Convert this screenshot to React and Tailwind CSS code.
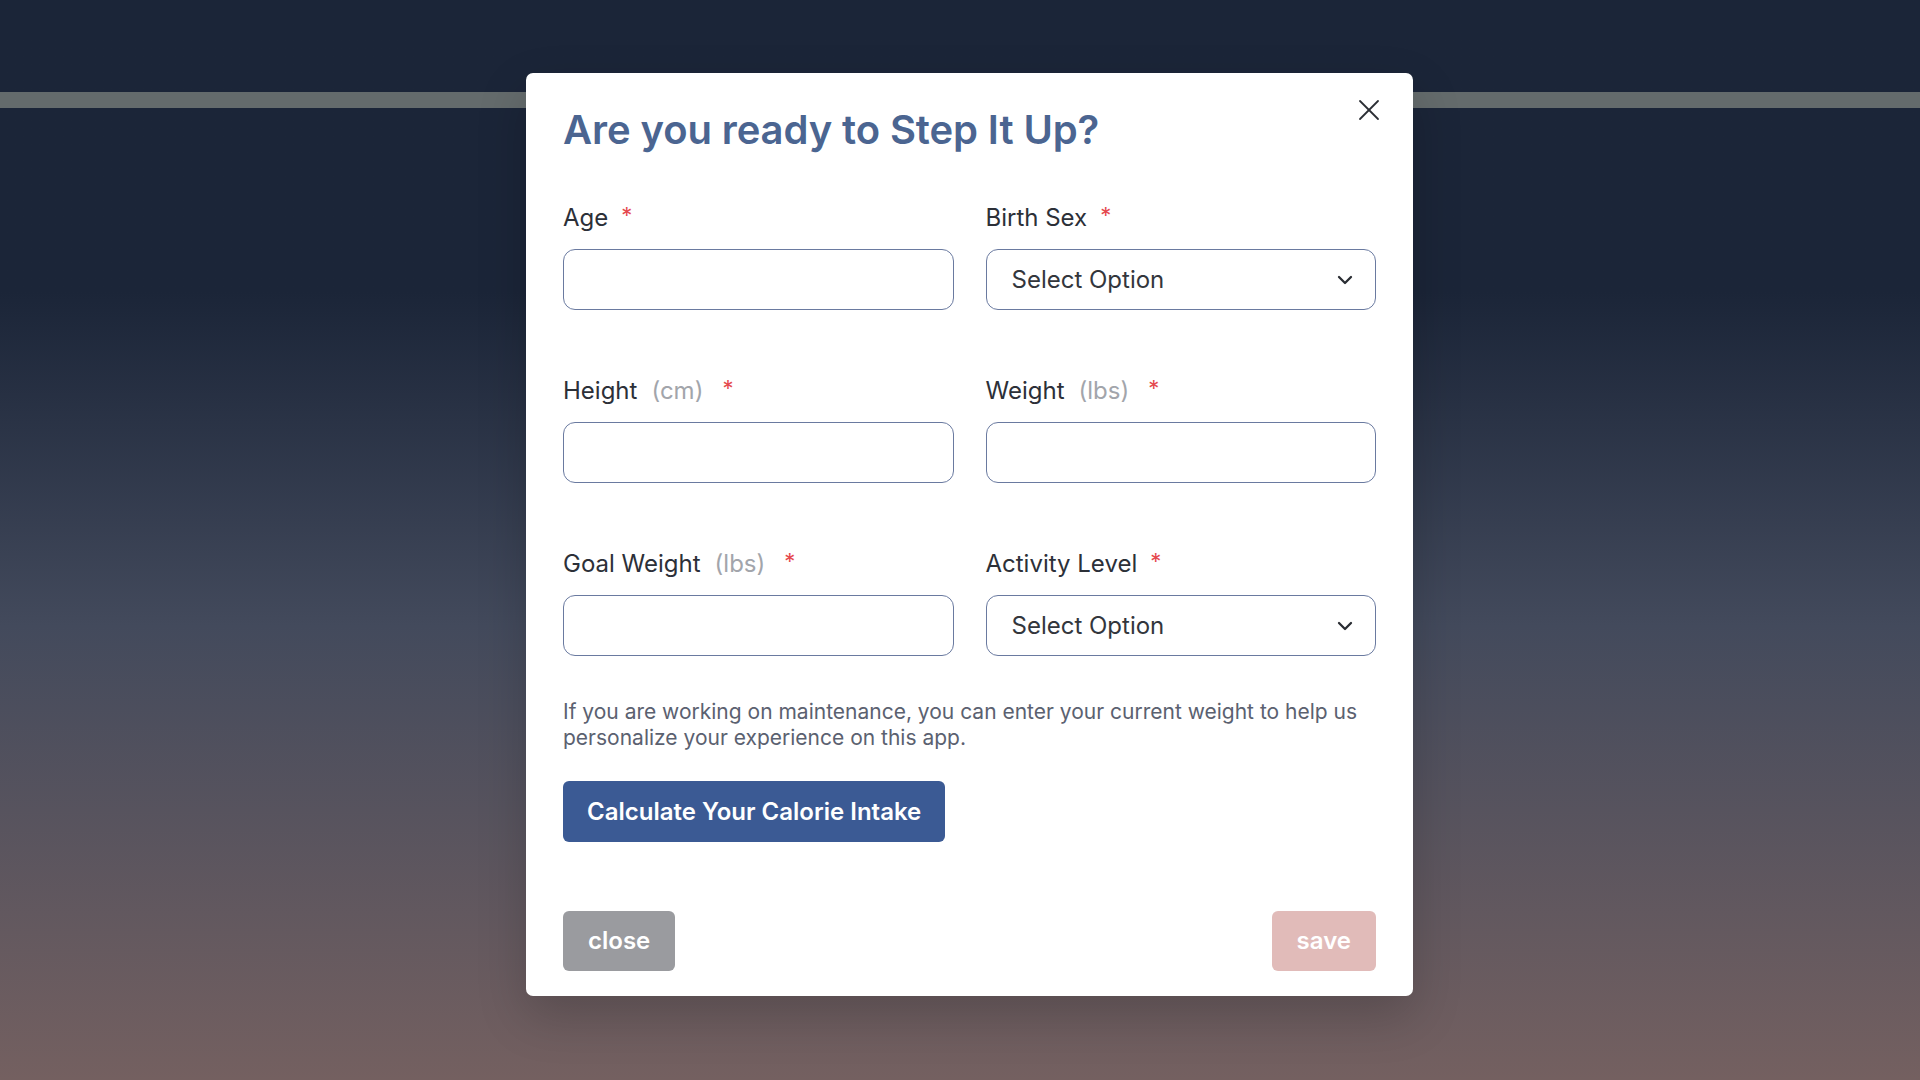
import { X, ChevronDown } from 'lucide-react';

// ─── Form field ───────────────────────────────────────────────────────────────

const Field = ({ label, unit, children }) => (
    <div className="flex flex-col">
        <div className="flex items-center h-[30px] text-[24px] leading-[30px] text-[#2c3038]">
            <span>{label}</span>
            {unit && <span className="ml-[14px] text-[#a2a5ab]">{unit}</span>}
            <span className={`${unit ? 'ml-[19px]' : 'ml-[13px]'} text-[22px] leading-none text-[#e5484d] -translate-y-[3px]`}>*</span>
        </div>
        <div className="mt-[16px]">{children}</div>
    </div>
);

const TextInput = () => (
    <input
        type="text"
        className="block w-full h-[61px] px-[24px] rounded-[12px] border-[1.5px] border-[#6a7aa0] bg-white text-[24px] text-[#333] outline-none"
    />
);

const SelectBox = () => (
    <div className="flex items-center justify-between w-full h-[61px] pl-[25px] pr-[18px] rounded-[12px] border-[1.5px] border-[#6a7aa0] bg-white">
        <span className="text-[24px] text-[#33363c]">Select Option</span>
        <ChevronDown className="w-[24px] h-[24px] text-[#2a2d33]" strokeWidth={2.3} />
    </div>
);

// ─── Page ─────────────────────────────────────────────────────────────────────

export default function App() {
    return (
        <div className="relative w-full h-[1080px] overflow-hidden font-['Inter','Noto_Sans',sans-serif] bg-gradient-to-b from-[#1b2538] from-[27%] via-[#434a5c] via-[58%] to-[#746060]">
            {/* header strip behind the overlay */}
            <div className="mt-[92px] h-[16px] bg-[#646b6c]" />

            {/* Modal */}
            <div className="absolute left-[526px] top-[73px] w-[887px] bg-white rounded-[7px] shadow-[0_20px_50px_rgba(0,0,0,0.18)] px-[37px] pt-[33px] pb-[25px]">
                <button className="absolute right-[26px] top-[19px] text-[#2a2d33]">
                    <X className="w-[36px] h-[36px]" strokeWidth={1.2} />
                </button>

                <h2 className="text-[40px] leading-[48px] font-semibold text-[#4b6591] tracking-[-0.1px]">
                    Are you ready to Step It Up?
                </h2>

                <div className="mt-[49px] grid grid-cols-2 gap-x-[32px] gap-y-[66px]">
                    <Field label="Age"><TextInput /></Field>
                    <Field label="Birth Sex"><SelectBox /></Field>
                    <Field label="Height" unit="(cm)"><TextInput /></Field>
                    <Field label="Weight" unit="(lbs)"><TextInput /></Field>
                    <Field label="Goal Weight" unit="(lbs)"><TextInput /></Field>
                    <Field label="Activity Level"><SelectBox /></Field>
                </div>

                <p className="mt-[43px] text-[21px] leading-[26px] text-[#5b6170]">
                    If you are working on maintenance, you can enter your current weight to help us personalize your experience on this app.
                </p>

                <button className="mt-[30px] h-[61px] px-[24px] rounded-[6px] bg-[#3b5a94] text-white text-[24px] font-semibold">
                    Calculate Your Calorie Intake
                </button>

                <div className="mt-[69px] flex items-center justify-between">
                    <button className="h-[60px] px-[25px] rounded-[6px] bg-[#9a9b9f] text-white text-[24px] font-semibold">
                        close
                    </button>
                    <button className="h-[60px] px-[25px] rounded-[6px] bg-[#e1bbb9] text-white text-[24px] font-semibold">
                        save
                    </button>
                </div>
            </div>
        </div>
    );
}
